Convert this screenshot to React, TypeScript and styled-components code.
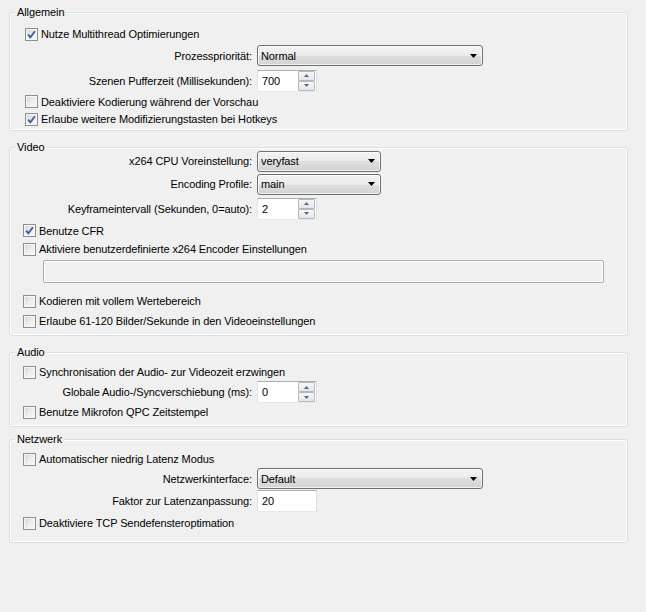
import * as React from 'react';
import styled, { createGlobalStyle } from 'styled-components';

const GlobalStyle = createGlobalStyle`
  html, body {
    margin: 0;
    padding: 0;
    background: #f0f0f0;
  }

  body {
    font-family: "Liberation Sans", Arial, sans-serif;
    font-size: 11px;
    color: #000;
  }
`;

const Page = styled.div`
  width: 646px;
  height: 612px;
  box-sizing: border-box;
  padding: 12px 0 0 9px;
  background: #f0f0f0;
  letter-spacing: -0.1px;
`;

const Group = styled.section<{ $pt: number; $pb: number; $mb: number }>`
  position: relative;
  width: 619px;
  box-sizing: border-box;
  display: flex;
  flex-direction: column;
  padding: ${({ $pt }) => $pt}px 0 ${({ $pb }) => $pb}px;
  margin-bottom: ${({ $mb }) => $mb}px;
  border: 1px solid #d5dfe5;
  border-radius: 3px;
  box-shadow: inset 0 0 0 1px #fff;
`;

const Caption = styled.span`
  position: absolute;
  top: -8px;
  left: 5px;
  padding: 0 2px;
  line-height: 14px;
  background: #f0f0f0;
`;

const CheckRow = styled.div<{ $h: number; $indent: number; $mt?: number }>`
  display: flex;
  align-items: center;
  gap: 3px;
  height: ${({ $h }) => $h}px;
  margin-top: ${({ $mt }) => $mt ?? 0}px;
  padding-left: ${({ $indent }) => $indent}px;
  white-space: nowrap;
`;

const Box = styled.span`
  box-sizing: border-box;
  flex-shrink: 0;
  display: flex;
  align-items: center;
  justify-content: center;
  width: 13px;
  height: 13px;
  border: 1px solid #8e8f8f;
  background: linear-gradient(135deg, #d2d4d7 0%, #eceef0 55%, #f8f8f8 100%);
  box-shadow: inset 0 0 0 1px #f6f6f6;
`;

const FieldRow = styled.div<{ $h: number }>`
  display: flex;
  align-items: center;
  height: ${({ $h }) => $h}px;
  white-space: nowrap;
`;

const FieldLabel = styled.span`
  flex-shrink: 0;
  width: 242px;
  margin-right: 5px;
  text-align: right;
`;

const Combo = styled.div<{ $w: number }>`
  box-sizing: border-box;
  display: flex;
  align-items: center;
  justify-content: space-between;
  width: ${({ $w }) => $w}px;
  height: 21px;
  padding: 0 5px 0 3px;
  border: 1px solid #707070;
  border-radius: 3px;
  background: linear-gradient(#f3f3f3 0%, #ebebeb 50%, #dedede 50%, #d3d3d3 100%);
  box-shadow: inset 0 0 0 1px rgba(255, 255, 255, 0.7);
`;

const SpinBox = styled.div`
  box-sizing: border-box;
  display: flex;
  align-items: center;
  width: 60px;
  height: 22px;
  padding: 0 1px 0 4px;
  border: 1px solid;
  border-color: #abadb3 #dbdfe6 #e3e9ef #e2e3ea;
  background: #fff;
`;

const SpinButtons = styled.div`
  display: flex;
  flex-direction: column;
  margin-left: auto;
`;

const SpinButton = styled.span`
  box-sizing: border-box;
  display: flex;
  align-items: center;
  justify-content: center;
  width: 17px;
  height: 10px;
  border: 1px solid #b5b8be;
  border-radius: 1px;
  background: linear-gradient(#f7f7f7, #e4e6e9);
`;

const TextField = styled.div<{ $w: number; $disabled?: boolean }>`
  box-sizing: border-box;
  display: flex;
  align-items: center;
  width: ${({ $w }) => $w}px;
  height: ${({ $disabled }) => ($disabled ? 23 : 22)}px;
  padding-left: 4px;
  border: 1px solid;
  border-color: ${({ $disabled }) =>
    $disabled ? '#adadad' : '#abadb3 #dbdfe6 #e3e9ef #e2e3ea'};
  border-radius: ${({ $disabled }) => ($disabled ? '2px' : '0')};
  background: ${({ $disabled }) => ($disabled ? '#f0f0f0' : '#fff')};
  box-shadow: ${({ $disabled }) => ($disabled ? 'inset 0 0 0 1px #fff' : 'none')};
`;

const WideRow = styled.div`
  height: 23px;
  margin-top: 2px;
  padding-left: 33px;
`;

const CheckMark = () => (
  <svg width="9" height="9" viewBox="0 0 9 9">
    <path d="M1.2 4.6 L3.4 7.3 L7.9 1.2" fill="none" stroke="#3c5a9e" strokeWidth="1.8" />
  </svg>
);

const Check = ({ label, checked, h, indent, mt }: {
  label: string; checked?: boolean; h: number; indent: number; mt?: number;
}) => (
  <CheckRow $h={h} $indent={indent} $mt={mt}>
    <Box>{checked && <CheckMark />}</Box>
    <span>{label}</span>
  </CheckRow>
);

const DropArrow = () => (
  <svg width="7" height="4" viewBox="0 0 7 4">
    <polygon points="0,0 7,0 3.5,4" fill="#000" />
  </svg>
);

const SpinArrow = ({ up }: { up?: boolean }) => (
  <svg width="5" height="3" viewBox="0 0 5 3">
    <polygon points={up ? '0,3 5,3 2.5,0' : '0,0 5,0 2.5,3'} fill="#4f6891" />
  </svg>
);

const Select = ({ value, w }: { value: string; w: number }) => (
  <Combo $w={w}>
    <span>{value}</span>
    <DropArrow />
  </Combo>
);

const Spin = ({ value }: { value: string }) => (
  <SpinBox>
    <span>{value}</span>
    <SpinButtons>
      <SpinButton><SpinArrow up /></SpinButton>
      <SpinButton><SpinArrow /></SpinButton>
    </SpinButtons>
  </SpinBox>
);

const App = (): React.ReactElement => (
  <Page>
    <GlobalStyle />

    <Group $pt={12} $pb={2} $mb={16}>
      <Caption>Allgemein</Caption>
      <Check h={18} indent={15} checked label="Nutze Multithread Optimierungen" />
      <FieldRow $h={25}>
        <FieldLabel>Prozesspriorität:</FieldLabel>
        <Select value="Normal" w={226} />
      </FieldRow>
      <FieldRow $h={25}>
        <FieldLabel>Szenen Pufferzeit (Millisekunden):</FieldLabel>
        <Spin value="700" />
      </FieldRow>
      <Check h={17} indent={15} label="Deaktiviere Kodierung während der Vorschau" />
      <Check h={18} indent={15} checked label="Erlaube weitere Modifizierungstasten bei Hotkeys" />
    </Group>

    <Group $pt={2} $pb={4} $mb={16}>
      <Caption>Video</Caption>
      <FieldRow $h={22}>
        <FieldLabel>x264 CPU Voreinstellung:</FieldLabel>
        <Select value="veryfast" w={124} />
      </FieldRow>
      <FieldRow $h={24}>
        <FieldLabel>Encoding Profile:</FieldLabel>
        <Select value="main" w={124} />
      </FieldRow>
      <FieldRow $h={25}>
        <FieldLabel>Keyframeintervall (Sekunden, 0=auto):</FieldLabel>
        <Spin value="2" />
      </FieldRow>
      <Check h={19} indent={13} checked label="Benutze CFR" />
      <Check h={18} indent={13} label="Aktiviere benutzerdefinierte x264 Encoder Einstellungen" />
      <WideRow>
        <TextField $w={561} $disabled />
      </WideRow>
      <Check h={20} indent={13} mt={8} label="Kodieren mit vollem Wertebereich" />
      <Check h={20} indent={13} label="Erlaube 61-120 Bilder/Sekunde in den Videoeinstellungen" />
    </Group>

    <Group $pt={10} $pb={5} $mb={12}>
      <Caption>Audio</Caption>
      <Check h={18} indent={13} label="Synchronisation der Audio- zur Videozeit erzwingen" />
      <FieldRow $h={22}>
        <FieldLabel>Globale Audio-/Syncverschiebung (ms):</FieldLabel>
        <Spin value="0" />
      </FieldRow>
      <Check h={18} indent={13} label="Benutze Mikrofon QPC Zeitstempel" />
    </Group>

    <Group $pt={10} $pb={8} $mb={0}>
      <Caption>Netzwerk</Caption>
      <Check h={18} indent={13} label="Automatischer niedrig Latenz Modus" />
      <FieldRow $h={21}>
        <FieldLabel>Netzwerkinterface:</FieldLabel>
        <Select value="Default" w={226} />
      </FieldRow>
      <FieldRow $h={23}>
        <FieldLabel>Faktor zur Latenzanpassung:</FieldLabel>
        <TextField $w={60}>20</TextField>
      </FieldRow>
      <Check h={22} indent={13} label="Deaktiviere TCP Sendefensteroptimation" />
    </Group>
  </Page>
);

export default App;
